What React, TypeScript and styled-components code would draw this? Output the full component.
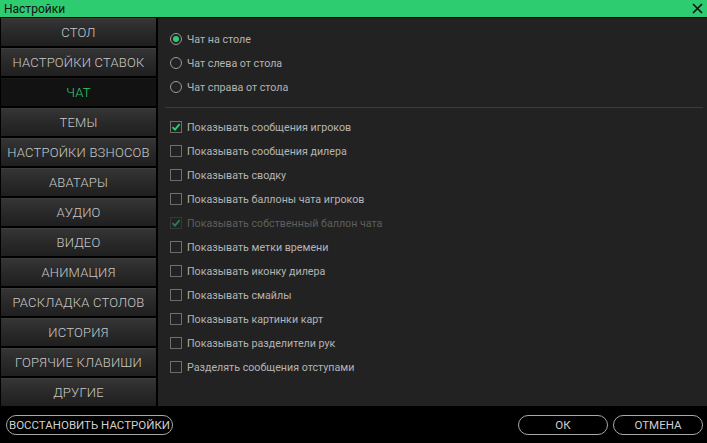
import { createGlobalStyle, styled } from "styled-components";

const GlobalStyle = createGlobalStyle`
  html, body {
    margin: 0;
    padding: 0;
    background: #000;
  }
  * {
    box-sizing: border-box;
  }
`;

const GREEN = "#2ecc71";

const menuItems = [
  "СТОЛ",
  "НАСТРОЙКИ СТАВОК",
  "ЧАТ",
  "ТЕМЫ",
  "НАСТРОЙКИ ВЗНОСОВ",
  "АВАТАРЫ",
  "АУДИО",
  "ВИДЕО",
  "АНИМАЦИЯ",
  "РАСКЛАДКА СТОЛОВ",
  "ИСТОРИЯ",
  "ГОРЯЧИЕ КЛАВИШИ",
  "ДРУГИЕ",
];

const radios = [
  { label: "Чат на столе", checked: true },
  { label: "Чат слева от стола", checked: false },
  { label: "Чат справа от стола", checked: false },
];

const checks = [
  { label: "Показывать сообщения игроков", checked: true },
  { label: "Показывать сообщения дилера", checked: false },
  { label: "Показывать сводку", checked: false },
  { label: "Показывать баллоны чата игроков", checked: false },
  { label: "Показывать собственный баллон чата", checked: true, disabled: true },
  { label: "Показывать метки времени", checked: false },
  { label: "Показывать иконку дилера", checked: false },
  { label: "Показывать смайлы", checked: false },
  { label: "Показывать картинки карт", checked: false },
  { label: "Показывать разделители рук", checked: false },
  { label: "Разделять сообщения отступами", checked: false },
];

const Window = styled.div`
  width: 707px;
  height: 443px;
  display: flex;
  flex-direction: column;
  background: #000;
  font-family: Roboto, "Liberation Sans", sans-serif;
  overflow: hidden;
`;

const TitleBar = styled.div`
  height: 17px;
  background: ${GREEN};
  display: flex;
  align-items: center;
  justify-content: space-between;
  padding: 0 4px 0 4px;
  font-size: 12px;
  color: #111;
`;

const Main = styled.div`
  display: flex;
  gap: 2px;
  padding: 1px 0 0 1px;
  height: 389px;
`;

const Sidebar = styled.div`
  width: 155px;
  display: flex;
  flex-direction: column;
  gap: 2px;
`;

const MenuButton = styled.div<{ $active?: boolean }>`
  height: 28px;
  display: flex;
  align-items: center;
  justify-content: center;
  font-size: 13px;
  font-weight: 300;
  letter-spacing: 0.2px;
  white-space: nowrap;
  color: ${(p) => (p.$active ? GREEN : "#c8c8c8")};
  background: ${(p) =>
    p.$active
      ? "#121212"
      : "linear-gradient(to bottom, #353535 0%, #2a2a2a 45%, #1f1f1f 100%)"};
  border-top: 1px solid ${(p) => (p.$active ? "#1a1a1a" : "#3e3e3e")};
`;

const Panel = styled.div`
  flex: 1;
  height: 388px;
  background: #222;
  padding: 9px 4px 0 12px;
  display: flex;
  flex-direction: column;
`;

const Row = styled.div<{ $disabled?: boolean }>`
  height: 24px;
  display: flex;
  align-items: center;
  gap: 5px;
  font-size: 10.7px;
  color: ${(p) => (p.$disabled ? "#5e5e5e" : "#b4b4b4")};
`;

const Radio = styled.span<{ $checked?: boolean }>`
  width: 12px;
  height: 12px;
  border-radius: 50%;
  border: 1px solid #9a9a9a;
  display: flex;
  align-items: center;
  justify-content: center;
  &::after {
    content: "";
    width: 6px;
    height: 6px;
    border-radius: 50%;
    background: ${(p) => (p.$checked ? GREEN : "transparent")};
  }
`;

const Box = styled.span<{ $disabled?: boolean }>`
  width: 12px;
  height: 12px;
  border: 1px solid ${(p) => (p.$disabled ? "#4a4a4a" : "#6e6e6e")};
  display: flex;
  align-items: center;
  justify-content: center;
  opacity: ${(p) => (p.$disabled ? 0.55 : 1)};
`;

const Separator = styled.div`
  height: 1px;
  background: #3c3c3c;
  margin: 8px 0 7px -5px;
`;

const BottomBar = styled.div`
  flex: 1;
  display: flex;
  align-items: center;
  justify-content: space-between;
  padding: 1px 4px 0 6px;
`;

const Actions = styled.div`
  display: flex;
  gap: 5px;
`;

const PillButton = styled.div<{ $width?: number }>`
  height: 20px;
  width: ${(p) => (p.$width ? `${p.$width}px` : "auto")};
  padding: 0 4px;
  border: 1px solid #a8a8a8;
  border-radius: 10px;
  display: flex;
  align-items: center;
  justify-content: center;
  font-size: 11.5px;
  color: #cfcfcf;
  white-space: nowrap;
`;

const Check = () => (
  <svg width="10" height="10" viewBox="0 0 10 10">
    <path d="M1.5 5.2 L4 7.6 L8.6 2.2" fill="none" stroke={GREEN} strokeWidth="1.8" />
  </svg>
);

const CloseIcon = () => (
  <svg width="11" height="11" viewBox="0 0 11 11">
    <path d="M1 1 L10 10 M10 1 L1 10" stroke="#111" strokeWidth="1.6" />
  </svg>
);

export default function App() {
  return (
    <Window>
      <GlobalStyle />
      <TitleBar>
        <span>Настройки</span>
        <CloseIcon />
      </TitleBar>
      <Main>
        <Sidebar>
          {menuItems.map((item) => (
            <MenuButton key={item} $active={item === "ЧАТ"}>
              {item}
            </MenuButton>
          ))}
        </Sidebar>
        <Panel>
          {radios.map((r) => (
            <Row key={r.label}>
              <Radio $checked={r.checked} />
              {r.label}
            </Row>
          ))}
          <Separator />
          {checks.map((c) => (
            <Row key={c.label} $disabled={c.disabled}>
              <Box $disabled={c.disabled}>{c.checked && <Check />}</Box>
              {c.label}
            </Row>
          ))}
        </Panel>
      </Main>
      <BottomBar>
        <PillButton $width={167}>ВОССТАНОВИТЬ НАСТРОЙКИ</PillButton>
        <Actions>
          <PillButton $width={90}>ОК</PillButton>
          <PillButton $width={90}>ОТМЕНА</PillButton>
        </Actions>
      </BottomBar>
    </Window>
  );
}
